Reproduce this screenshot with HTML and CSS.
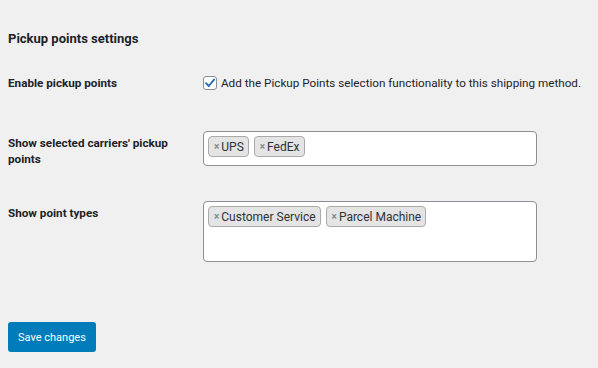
FILE: index.html
```html
<!DOCTYPE html>
<html lang="en">
<head>
    <meta charset="UTF-8">
    <meta name="viewport" content="width=device-width, initial-scale=1.0">
    <title>Pickup points settings</title>
    <link rel="stylesheet" href="styles.css">
</head>
<body>
    <div class="wrap">
        <h2 class="title">Pickup points settings</h2>

        <div class="form-table">
            <div class="row row-check">
                <label class="row-label" for="enablePickup">Enable pickup points</label>
                <div class="row-field">
                    <label class="check-line">
                        <span class="checkbox">
                            <svg viewBox="0 0 14 14" width="14" height="14"><path d="M3 7.2 L5.8 10 L11 3.6" fill="none" stroke="#2271b1" stroke-width="1.9" stroke-linecap="round" stroke-linejoin="round"/></svg>
                        </span>
                        Add the Pickup Points selection functionality to this shipping method.
                    </label>
                </div>
            </div>

            <div class="row row-select">
                <label class="row-label">Show selected carriers' pickup points</label>
                <div class="row-field">
                    <div class="multi-select">
                        <span class="tag"><span class="tag-x">×</span>UPS</span>
                        <span class="tag"><span class="tag-x">×</span>FedEx</span>
                    </div>
                </div>
            </div>

            <div class="row row-select">
                <label class="row-label">Show point types</label>
                <div class="row-field">
                    <div class="multi-select tall">
                        <span class="tag"><span class="tag-x">×</span>Customer Service</span>
                        <span class="tag"><span class="tag-x">×</span>Parcel Machine</span>
                    </div>
                </div>
            </div>
        </div>

        <div class="submit">
            <button class="button-primary">Save changes</button>
        </div>
    </div>
</body>
</html>
```

FILE: styles.css
```css
body, html {
    margin: 0;
    background: #f0f0f1;
    color: #1d2327;
    font-family: Roboto, "Liberation Sans", sans-serif;
    font-size: 11.7px;
}

.wrap {
    padding: 0 8px;
}

.title {
    margin: 0;
    padding-top: 31px;
    font-size: 13px;
    font-weight: 700;
    line-height: 16px;
}

.form-table {
    margin-top: 28px;
}

.row {
    display: grid;
    grid-template-columns: 195px 1fr;
}

.row-label {
    font-weight: 700;
    line-height: 16px;
    padding-right: 10px;
}

.row-check {
    align-items: center;
}

.row-select {
    margin-top: 40px;
}

.row-select .row-label {
    padding-top: 4px;
}

.row-select + .row-select {
    margin-top: 34px;
}

.check-line {
    display: flex;
    align-items: center;
    gap: 4px;
    line-height: 16px;
    white-space: nowrap;
}

.checkbox {
    display: inline-flex;
    box-sizing: border-box;
    width: 14px;
    height: 14px;
    border: 1px solid #8c8f94;
    border-radius: 3px;
    background: #fff;
    align-items: center;
    justify-content: center;
}

.checkbox svg {
    flex: none;
}

.multi-select {
    box-sizing: border-box;
    width: 334px;
    height: 35px;
    background: #fff;
    border: 1px solid #8c8f94;
    border-radius: 4px;
    padding: 4px;
    display: flex;
    align-items: flex-start;
    gap: 5px;
}

.multi-select.tall {
    height: 61px;
}

.tag {
    box-sizing: border-box;
    height: 21px;
    display: inline-flex;
    align-items: center;
    padding: 0 4px 0 5px;
    background: #e4e4e4;
    border: 1px solid #aaa;
    border-radius: 4px;
    color: #2c3338;
    font-size: 12px;
}

.tag-x {
    color: #888;
    font-size: 10px;
    font-weight: 700;
    margin-right: 2px;
}

.submit {
    margin-top: 60px;
}

.button-primary {
    background: #007cba;
    border: none;
    border-radius: 3px;
    color: #fff;
    font-family: inherit;
    font-size: 11px;
    height: 30px;
    padding: 0 10px;
}
```
